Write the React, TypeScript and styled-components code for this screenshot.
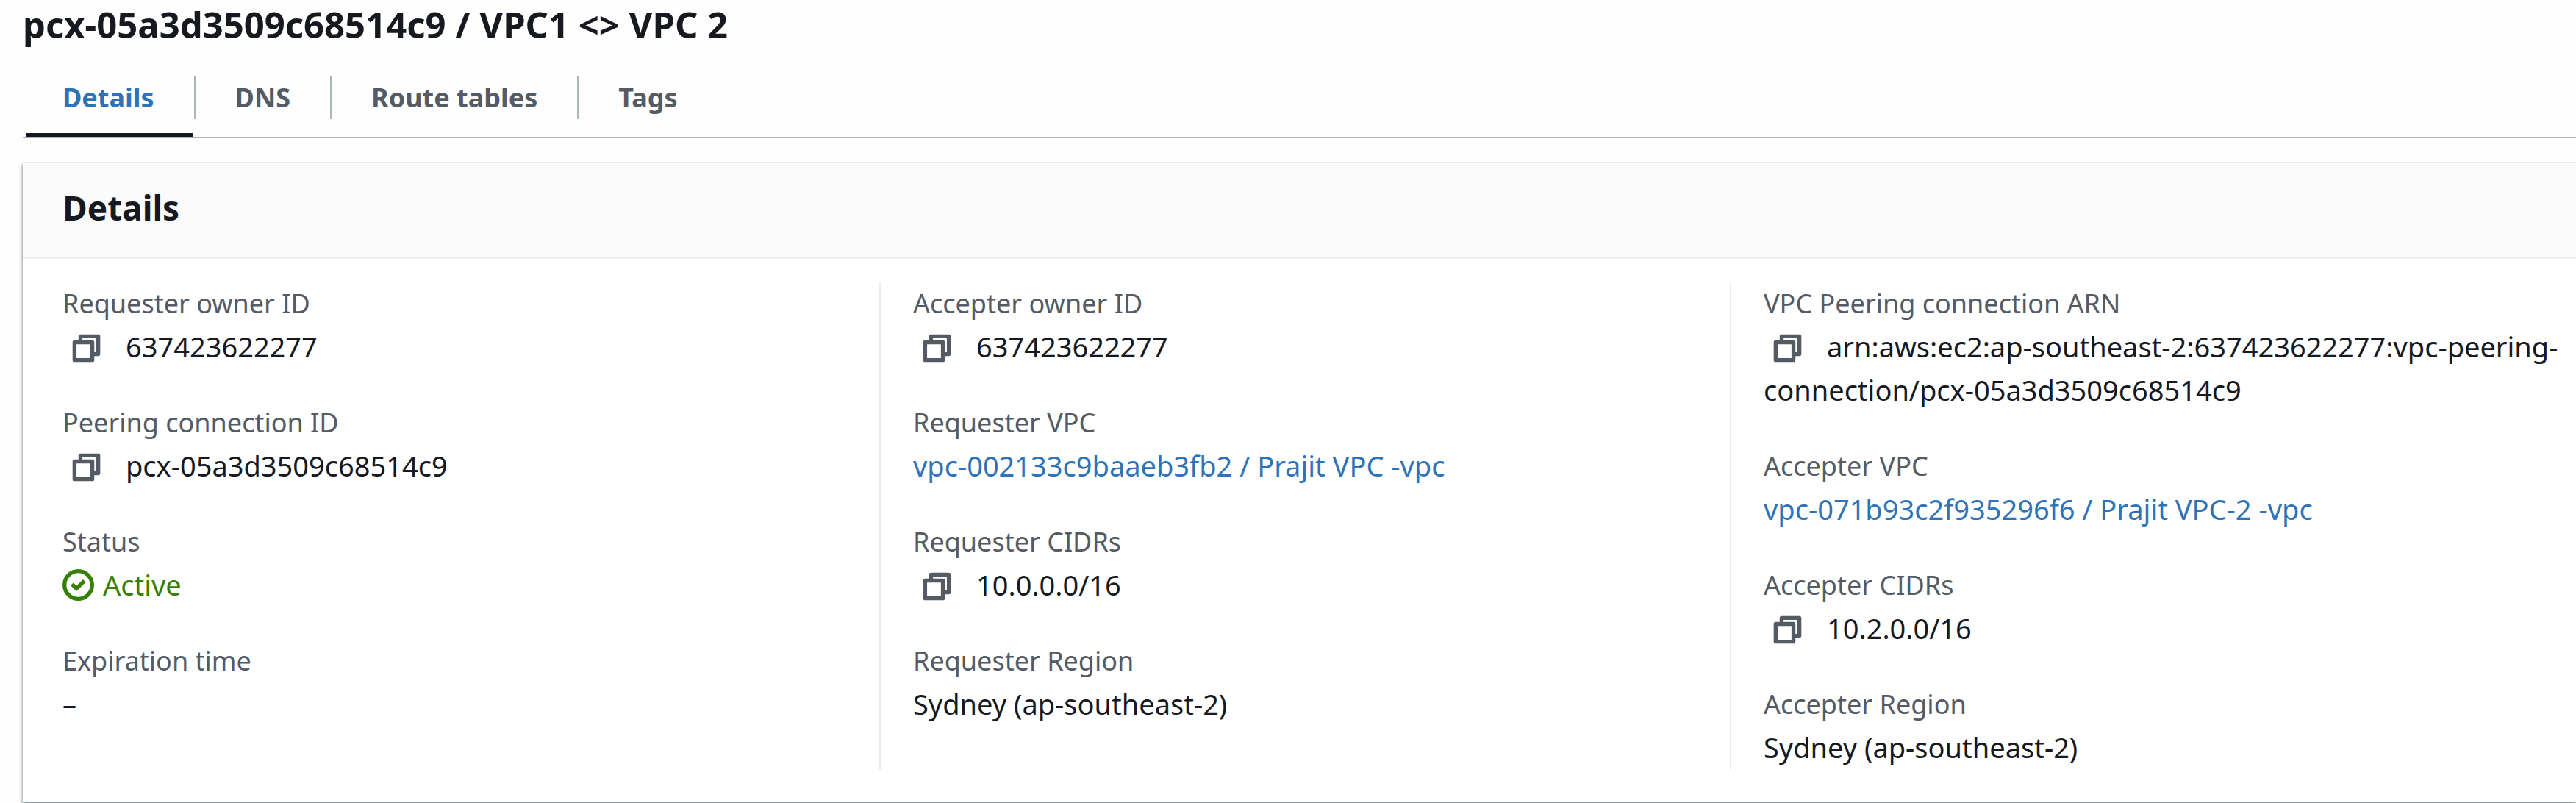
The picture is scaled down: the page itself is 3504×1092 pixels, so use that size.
import React, { useState } from "react";
import styled, { createGlobalStyle } from "styled-components";

const GlobalStyle = createGlobalStyle`
  *, *::before, *::after { box-sizing: border-box; }
  body {
    margin: 0;
    background: #fefefe;
    color: #16191f;
    font-family: "Noto Sans", "Open Sans", sans-serif;
    font-size: 38px;
    line-height: 59px;
    overflow-x: hidden;
  }
`;

const Page = styled.main`
  min-height: 100vh;
  padding: 0 0 2px 31px;
`;

const Title = styled.h1`
  margin: 0;
  font-size: 49px;
  line-height: 67px;
  font-weight: 700;
`;

const TabList = styled.div`
  display: flex;
  height: 121px;
  margin-bottom: 32px;
  padding-top: 37px;
  border-bottom: 2px solid #aab7b8;
`;

const TabButton = styled.button<{ $active: boolean }>`
  display: flex;
  padding: 0;
  border: 0;
  background: ${(p) =>
    p.$active
      ? "linear-gradient(#16191f, #16191f) 5px 100% / calc(100% - 8px) 5px no-repeat"
      : "none"};
  color: ${(p) => (p.$active ? "#2e73b8" : "#545b64")};
  font: inherit;
  font-size: 36px;
  font-weight: 700;
  cursor: pointer;

  &:not(:last-child) > span {
    border-right: 2px solid #aab7b8;
  }
`;

const TabText = styled.span`
  height: 58px;
  padding: 0 54px;
  line-height: 58px;
  white-space: nowrap;
`;

const Card = styled.section`
  background: #ffffff;
  border-top: 2px solid #eaeded;
  box-shadow: 0 3px 3px 0 rgba(0, 28, 36, 0.3), 3px 3px 3px 0 rgba(0, 28, 36, 0.15),
    -3px 3px 3px 0 rgba(0, 28, 36, 0.15);
`;

const CardHeader = styled.header`
  padding: 26px 54px 34px;
  background: #fafafa;
  border-bottom: 2px solid #eaeded;
`;

const CardTitle = styled.h2`
  margin: 0;
  font-size: 46px;
  line-height: 68px;
  font-weight: 700;
`;

const Columns = styled.div`
  display: flex;
  margin-right: -6px;
  padding: 31px 0 43px 54px;
`;

const Column = styled.dl`
  box-sizing: content-box;
  display: flex;
  flex: 1 1 0;
  flex-direction: column;
  gap: 44px;
  min-width: 0;
  margin: 0;
  padding-bottom: 1px;
  & + & {
    padding-left: 44px;
    border-left: 2px solid #eaeded;
  }
`;

const Field = styled.div``;

const Label = styled.dt`
  color: #545b64;
  font-size: 36px;
`;

const Value = styled.dd`
  margin: 0;
`;

const CopyButton = styled.button`
  display: inline-block;
  height: 43px;
  margin: 0 32px 0 11px;
  padding: 0;
  border: 0;
  background: none;
  color: #545b64;
  line-height: 0;
  vertical-align: -9px;
  cursor: pointer;
`;

const Link = styled.a`
  color: #2e73b8;
  text-decoration: none;
`;

const Status = styled.span`
  display: flex;
  align-items: center;
  gap: 12px;
  color: #378006;
`;

const Icon = styled.svg`
  width: 43px;
  height: 43px;
  fill: none;
  stroke: currentColor;
  stroke-width: 2;
`;

function Copyable({ name, text }: { name: string; text: string }) {
  return (
    <>
      <CopyButton type="button" aria-label={`Copy ${name}`}>
        <Icon viewBox="0 0 16 16" strokeLinejoin="round">
          <path d="M2 5h9v9H2z" />
          <path d="M5 5V2h9v9h-3" />
        </Icon>
      </CopyButton>
      {text}
    </>
  );
}

type FieldData = {
  label: string;
  value: string;
  kind?: "copy" | "link" | "status";
};

const columns: FieldData[][] = [
  [
    { label: "Requester owner ID", value: "637423622277", kind: "copy" },
    { label: "Peering connection ID", value: "pcx-05a3d3509c68514c9", kind: "copy" },
    { label: "Status", value: "Active", kind: "status" },
    { label: "Expiration time", value: "–" },
  ],
  [
    { label: "Accepter owner ID", value: "637423622277", kind: "copy" },
    { label: "Requester VPC", value: "vpc-002133c9baaeb3fb2 / Prajit VPC -vpc", kind: "link" },
    { label: "Requester CIDRs", value: "10.0.0.0/16", kind: "copy" },
    { label: "Requester Region", value: "Sydney (ap-southeast-2)" },
  ],
  [
    {
      label: "VPC Peering connection ARN",
      value: "arn:aws:ec2:ap-southeast-2:637423622277:vpc-peering-connection/pcx-05a3d3509c68514c9",
      kind: "copy",
    },
    { label: "Accepter VPC", value: "vpc-071b93c2f935296f6 / Prajit VPC-2 -vpc", kind: "link" },
    { label: "Accepter CIDRs", value: "10.2.0.0/16", kind: "copy" },
    { label: "Accepter Region", value: "Sydney (ap-southeast-2)" },
  ],
];

function FieldValue({ label, value, kind }: FieldData) {
  if (kind === "copy") return <Copyable name={label} text={value} />;
  if (kind === "link") return <Link href="#">{value}</Link>;
  if (kind === "status") {
    return (
      <Status>
        <Icon viewBox="0 0 16 16" aria-hidden="true">
          <circle cx="8" cy="8" r="7" />
          <path d="M4.8 7.6 7.05 9.8 11.1 5.9" />
        </Icon>
        {value}
      </Status>
    );
  }
  return <>{value}</>;
}

const tabs = ["Details", "DNS", "Route tables", "Tags"];

export default function App() {
  const [active, setActive] = useState(tabs[0]);
  return (
    <Page>
      <GlobalStyle />
      <Title>pcx-05a3d3509c68514c9 / VPC1 &lt;&gt; VPC 2</Title>
      <TabList role="tablist">
        {tabs.map((tab) => (
          <TabButton
            key={tab}
            type="button"
            role="tab"
            aria-selected={tab === active}
            $active={tab === active}
            onClick={() => setActive(tab)}
          >
            <TabText>{tab}</TabText>
          </TabButton>
        ))}
      </TabList>
      <Card>
        <CardHeader>
          <CardTitle>Details</CardTitle>
        </CardHeader>
        <Columns>
          {columns.map((fields, i) => (
            <Column key={i}>
              {fields.map((field) => (
                <Field key={field.label}>
                  <Label>{field.label}</Label>
                  <Value>
                    <FieldValue {...field} />
                  </Value>
                </Field>
              ))}
            </Column>
          ))}
        </Columns>
      </Card>
    </Page>
  );
}
